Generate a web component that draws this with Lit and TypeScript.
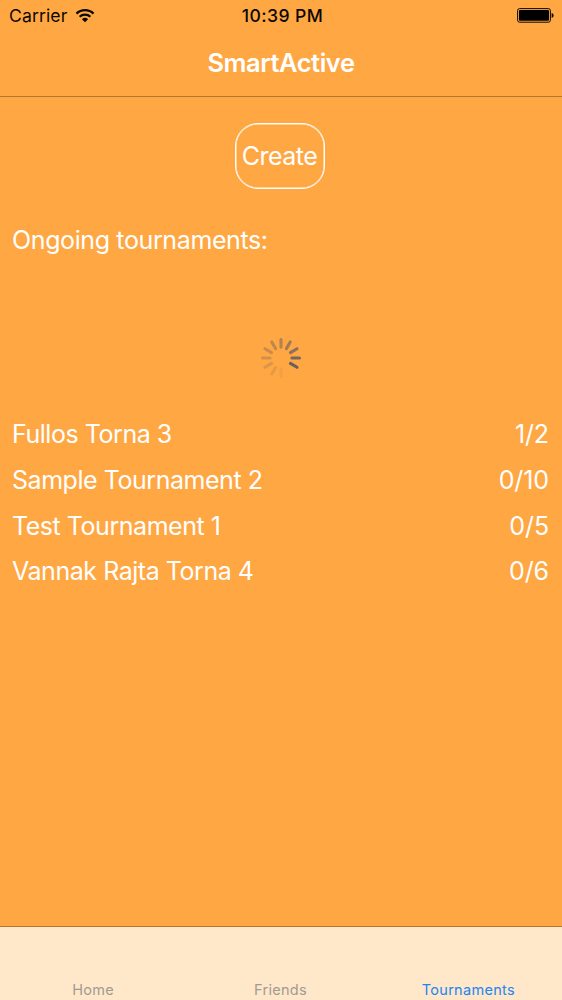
import { LitElement, html, svg, css } from "lit";
import { customElement } from "lit/decorators.js";
import { classMap } from "lit/directives/class-map.js";

const tournaments = [
  { name: "Fullos Torna 3", players: "1/2" },
  { name: "Sample Tournament 2", players: "0/10" },
  { name: "Test Tournament 1", players: "0/5" },
  { name: "Vannak Rajta Torna 4", players: "0/6" },
];

const tabs = [
  { label: "Home", active: false },
  { label: "Friends", active: false },
  { label: "Tournaments", active: true },
];

// Clockwise from twelve o'clock; the darkest spoke is the leading one.
const spokes = [
  ["#b3824f", 1], ["#a27a53", 1], ["#8f7159", 1], ["#79675d", 1], ["#68605f", 1],
  ["#ffa743", 0], ["#f29f45", 1], ["#e69a46", 1], ["#dc9548", 1], ["#d29149", 1],
  ["#c98c4b", 1], ["#be874d", 1],
] as const;

@customElement("app-root")
export class AppRoot extends LitElement {
  static styles = css`
    :host {
      display: flex;
      flex-direction: column;
      width: 562px;
      height: 1000px;
      overflow: hidden;
      background: #ffa743;
      color: #fff;
      font: 400 25px/46px Inter, "Liberation Sans", sans-serif;
      letter-spacing: -0.46px;
      white-space: nowrap;
    }
    .status {
      display: grid;
      grid-template-columns: 1fr auto 1fr;
      align-items: center;
      height: 31px;
      box-sizing: border-box;
      padding: 0 8px 0 9px;
      color: #0b0703;
      font-size: 17.6px;
      line-height: 31px;
      letter-spacing: 0.1px;
    }
    .carrier { display: flex; align-items: center; gap: 7.5px; }
    .time { padding-left: 2px; font-weight: 500; letter-spacing: 0.45px; }
    .battery { justify-self: end; }
    svg { display: block; }
    .title {
      height: 65px;
      border-bottom: 1px solid #b37631;
      text-align: center;
      font-size: 25.5px;
      font-weight: 600;
      line-height: 63px;
      letter-spacing: -0.45px;
    }
    main { flex: 1; display: flex; flex-direction: column; }
    .create {
      align-self: center;
      width: 90px;
      height: 66px;
      margin: 26px 2px 0 0;
      padding: 0 1px 0 0;
      border: 1px solid #fff;
      border-radius: 23px;
      box-shadow: inset 0 0 0 0.5px #fff;
      background: none;
      color: inherit;
      font: inherit;
      letter-spacing: -0.5px;
    }
    .heading { margin: 28px 0 0 12px; font: inherit; letter-spacing: -0.38px; }
    .spinner { align-self: center; margin-top: 74px; }
    .list { list-style: none; margin: 32px 0 0; padding: 0 13px 0 12px; }
    .row { display: flex; justify-content: space-between; height: 45.8px; }
    .players { letter-spacing: -0.1px; }
    .tabs {
      display: grid;
      grid-template-columns: repeat(3, 1fr);
      height: 73px;
      border-top: 1px solid #b37631;
      background: #ffe7c9;
    }
    .tab {
      align-self: end;
      padding-right: 1px;
      text-align: center;
      color: #a19b93;
      font-size: 14.5px;
      line-height: 20px;
      letter-spacing: 0.3px;
    }
    .active { padding-right: 0; color: #2085f5; }
  `;

  render() {
    return html`
      <header class="status">
        <div class="carrier">
          <span class="label">Carrier</span>
          <svg width="20" height="15" viewBox="0 0 20 15" fill="none" stroke="#0b0703">
            <path d="M1.5 5.6a12.2 12.2 0 0 1 17 0" stroke-width="2.3" />
            <path d="M4.6 8.8a7.8 7.8 0 0 1 10.8 0" stroke-width="2.2" />
            <path d="M6.9 11.3a4.5 4.5 0 0 1 6.2 0L10 14.2z" fill="#0b0703" stroke="none" />
          </svg>
        </div>
        <div class="time">10:39 PM</div>
        <svg class="battery" width="37" height="15" viewBox="0 0 37 15">
          <rect x=".6" y=".6" width="32.8" height="13.6" rx="2" fill="none" stroke="#0b0703" stroke-width="1" />
          <rect x="2" y="2" width="30" height="10.8" rx=".8" fill="#000" />
          <path d="M34.6 5v4.8c1.6-.5 2-1.4 2-2.4s-.4-1.9-2-2.4z" fill="#0b0703" />
        </svg>
      </header>
      <div class="title"><span>SmartActive</span></div>
      <main>
        <button class="create">Create</button>
        <h2 class="heading"><span>Ongoing tournaments:</span></h2>
        <svg class="spinner" width="42" height="42" viewBox="-21 -21 42 42">
          ${spokes.map(([color, opacity], i) => svg`
            <line y1="-10.9" y2="-18.5" stroke=${color} stroke-opacity=${opacity}
              stroke-width="3.1" stroke-linecap="round" transform="rotate(${i * 30})" />`)}
        </svg>
        <ul class="list">
          ${tournaments.map((t) => html`
            <li class="row"><span>${t.name}</span><span class="players">${t.players}</span></li>`)}
        </ul>
      </main>
      <nav class="tabs">
        ${tabs.map((t) => html`
          <div class=${classMap({ tab: true, active: t.active })}>${t.label}</div>`)}
      </nav>
    `;
  }
}
